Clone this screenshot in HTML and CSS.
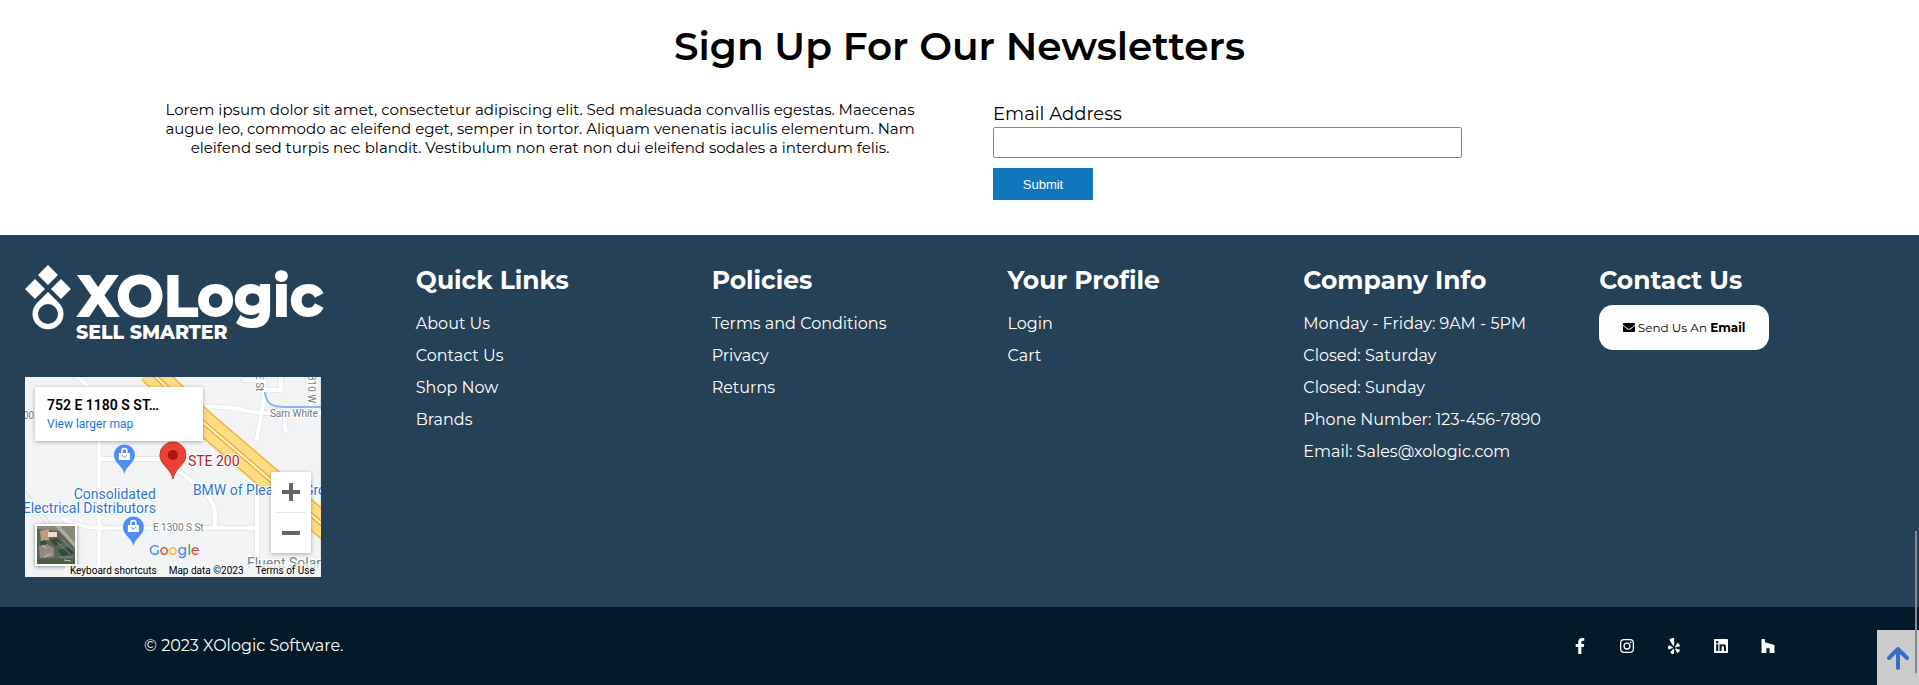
FILE: index.html
```html
<!DOCTYPE html>
<html lang="en">
<head>
<meta charset="utf-8">
<title>XOLogic</title>
<link rel="stylesheet" href="styles.css">
</head>
<body>
<section class="newsletter">
  <h2 class="newsletter-title">Sign Up For Our Newsletters</h2>
  <div class="newsletter-grid">
    <p class="newsletter-text">Lorem ipsum dolor sit amet, consectetur adipiscing elit. Sed malesuada convallis egestas. Maecenas augue leo, commodo ac eleifend eget, semper in tortor. Aliquam venenatis iaculis elementum. Nam eleifend sed turpis nec blandit. Vestibulum non erat non dui eleifend sodales a interdum felis.</p>
    <form class="signup">
      <label for="email">Email Address</label>
      <input id="email" type="email">
      <button type="submit">Submit</button>
    </form>
  </div>
</section>

<footer class="footer">
  <div class="footer-grid">
    <div class="brand">
      <svg class="logo" viewBox="0 0 296 76" role="img" aria-label="XOLogic Sell Smarter">
        <g fill="#fff">
          <path d="M23 0L33 10L23 20L13 10ZM10 14L20 24L10 34L0 24ZM36 14L46 24L36 34L26 24Z"/>
          <path fill-rule="evenodd" d="M23 27L34 38A15.500 15.500 0 1 1 12 38ZM23 39A10 10 0 1 0 23 59A10 10 0 1 0 23 39Z"/>
          <text class="logo-name" x="53" y="51">XOLogic</text>
          <text class="logo-tag" x="51" y="74">SELL SMARTER</text>
        </g>
      </svg>
      <div class="map">
        <svg class="map-art" viewBox="0 0 296 200" preserveAspectRatio="xMidYMid slice" aria-hidden="true">
          <rect width="296" height="200" fill="#f1f3f4"/>
          <g fill="none" stroke-linejoin="round" stroke-linecap="round">
            <g stroke="#dcdfe3" stroke-width="5">
              <path d="M52 0Q62 5 65 16M74 60V200M74 82H141Q150 87 154 94L174 110Q190 124 190 136V150M38 142Q58 151 76 151H232M232 110V200M178 30Q198 28 218 33Q230 36 250 36H296M239 0V22L232 62M219 3H239M239 13H256V0M260 38V53L262 53M286 0V30"/>
            </g>
            <g stroke="#fff" stroke-width="4">
              <path d="M52 0Q62 5 65 16M74 60V200M74 82H141Q150 87 154 94L174 110Q190 124 190 136V150M38 142Q58 151 76 151H232M232 110V200M178 30Q198 28 218 33Q230 36 250 36H296M239 0V22L232 62M219 3H239M239 13H256V0M260 38V53L262 53M286 0V30"/>
            </g>
            <path d="M0 113L26 147M0 121L60 196" stroke="#d5d7d9"/>
            <path d="M240 16C242 27 247 30 260 30H296" stroke="#8ab4f8" stroke-width="2"/>
            <g stroke-linecap="butt">
              <path d="M125 -6L178 45L234 93L304 153" stroke="#f0b43c" stroke-width="25"/>
              <path d="M125 -6L178 45L234 93L304 153" stroke="#fddc84" stroke-width="22"/>
              <path d="M125 -6L178 45L234 93L304 153" stroke="#f0b43c" stroke-width="5"/>
              <path d="M125 -6L178 45L234 93L304 153" stroke="#fff4d4" stroke-width="2"/>
            </g>
          </g>
          <g class="map-label" fill="#73777c" font-size="10">
            <text x="-2" y="42">00</text>
            <text x="245" y="40">Sam White</text>
            <text x="128" y="154">E 1300 S St</text>
            <text transform="translate(231 -3) rotate(90)">E St</text>
            <text transform="translate(283 -2) rotate(90)">310 W</text>
          </g>
          <g class="map-label" fill="#2f73d2" font-size="14">
            <text x="131" y="122" text-anchor="end">Consolidated</text>
            <text x="131" y="136" text-anchor="end">Electrical Distributors</text>
            <text x="168" y="118">BMW of Pleasant Grove</text>
            <text x="222" y="191" fill="#70838f">Fluent Solar</text>
            <text x="163" y="89" fill="#ad2424">STE 200</text>
          </g>
          <g>
            <path d="M99.500 97C98 89 89 86 89 78A10.500 10.500 0 0 1 110 78C110 86 101 89 99.500 97Z" fill="#4f8df5"/>
            <path d="M94 76H105V83H94Z" fill="#fff"/>
            <path d="M97 76V74A2.500 2.500 0 0 1 102 74V76" fill="none" stroke="#fff" stroke-width="1.500"/>
            <path d="M97 78Q99.500 82 102 78" fill="none" stroke="#4f8df5"/>
            <path d="M108.500 169C107 161 98 158 98 150A10.500 10.500 0 0 1 119 150C119 158 110 161 108.500 169Z" fill="#4f8df5"/>
            <path d="M103 148H114V155H103Z" fill="#fff"/>
            <path d="M106 148V146A2.500 2.500 0 0 1 111 146V148" fill="none" stroke="#fff" stroke-width="1.500"/>
            <path d="M106 150Q108.500 154 111 150" fill="none" stroke="#4f8df5"/>
          </g>
          <path d="M148 102C146 91 135 88 135 78A13 13 0 0 1 161 78C161 88 150 91 148 102Z" fill="#ea4335" stroke="#c5372b"/>
          <circle cx="148" cy="78" r="5" fill="#b11313"/>
          <text class="map-google" x="124" y="178" font-size="14"><tspan fill="#4285f4">G</tspan><tspan fill="#ea4335">o</tspan><tspan fill="#fbbc05">o</tspan><tspan fill="#4285f4">g</tspan><tspan fill="#34a853">l</tspan><tspan fill="#ea4335">e</tspan></text>
        </svg>
        <div class="map-card"><strong>752 E 1180 S ST…</strong><a href="#">View larger map</a></div>
        <div class="map-zoom">
          <button type="button" aria-label="Zoom in"><svg viewBox="0 0 18 18"><path d="M0 9H18M9 0V18"/></svg></button>
          <button type="button" aria-label="Zoom out"><svg viewBox="0 0 18 18"><path d="M0 9H18"/></svg></button>
        </div>
        <button type="button" class="map-satellite" aria-label="Show satellite imagery">
          <svg viewBox="0 0 38 38">
            <rect width="38" height="38" fill="#59645a"/>
            <path d="M0 0H38V20L22 5L0 3Z" fill="#89877b"/>
            <path d="M18 0L38 22V17L23 0Z" fill="#b3aca0"/>
            <path d="M3 5L12 3V14L4 15Z" fill="#bd9d7e"/><path d="M11 6H20V11H11Z" fill="#e8dfcd"/>
            <path d="M2 20L10 18L17 22V31L3 32Z" fill="#95897f"/>
            <path d="M0 33H38V38H0Z" fill="#4d5d43"/>
            <path d="M13 14L20 12L25 17L18 20ZM21 24L32 21L37 27L25 31ZM3 16L8 14L10 18L4 20Z" fill="#354b3a"/>
            <path d="M20 16L33 28M22 31H36M6 24L11 29M25 13L35 24" stroke="#87928a"/>
            <path d="M5 19L9 22M7 31L14 28M27 34L34 35" stroke="#ccc9bf"/>
          </svg>
        </button>
        <div class="map-legal"><a href="#">Keyboard shortcuts</a><span>Map data ©2023</span><a href="#">Terms of Use</a></div>
      </div>
    </div>
    <nav class="column" aria-label="Quick Links">
      <h3>Quick Links</h3>
      <ul><li><a href="#">About Us</a></li><li><a href="#">Contact Us</a></li><li><a href="#">Shop Now</a></li><li><a href="#">Brands</a></li></ul>
    </nav>
    <nav class="column" aria-label="Policies">
      <h3>Policies</h3>
      <ul><li><a href="#">Terms and Conditions</a></li><li><a href="#">Privacy</a></li><li><a href="#">Returns</a></li></ul>
    </nav>
    <nav class="column" aria-label="Your Profile">
      <h3>Your Profile</h3>
      <ul><li><a href="#">Login</a></li><li><a href="#">Cart</a></li></ul>
    </nav>
    <div class="column">
      <h3>Company Info</h3>
      <ul><li>Monday - Friday: 9AM - 5PM</li><li>Closed: Saturday</li><li>Closed: Sunday</li><li>Phone Number: 123-456-7890</li><li>Email: Sales@xologic.com</li></ul>
    </div>
    <div class="column">
      <h3>Contact Us</h3>
      <a class="email-button" href="#">
        <svg viewBox="0 64 512 384" aria-hidden="true"><path d="M502.300 190.800c3.900-3.100 9.700-.2 9.700 4.700V400c0 26.500-21.500 48-48 48H48c-26.500 0-48-21.500-48-48V195.600c0-5 5.700-7.800 9.700-4.700 22.400 17.400 52.100 39.500 154.100 113.600 21.100 15.400 56.700 47.800 92.200 47.600 35.700.3 72-32.800 92.300-47.600 102-74.100 131.600-96.300 154-113.700zM256 320c23.200.4 56.600-29.200 73.400-41.400 132.700-96.300 142.800-104.700 173.400-128.700 5.800-4.500 9.200-11.500 9.200-18.900v-19c0-26.500-21.500-48-48-48H48c-26.500 0-48 21.500-48 48v19c0 7.400 3.400 14.300 9.200 18.900 30.600 23.900 40.700 32.400 173.400 128.700 16.800 12.200 50.200 41.800 73.400 41.400z"/></svg>
        <span>Send Us An <b>Email</b></span>
      </a>
    </div>
  </div>
  <div class="bottom-bar">
    <span>© 2023 XOlogic Software.</span>
    <nav class="social" aria-label="Social media">
      <a href="#" aria-label="Facebook"><svg viewBox="0 0 320 512"><path d="M279.140 288l14.220-92.660h-88.910v-60.130c0-25.350 12.420-50.060 52.240-50.060h40.420V6.260S260.430 0 225.360 0c-73.220 0-121.080 44.380-121.080 124.720v70.620H22.890V288h81.390v224h100.170V288z"/></svg></a>
      <a href="#" aria-label="Instagram"><svg viewBox="0 0 448 512"><rect x="20" y="52" width="408" height="408" rx="110" fill="none" stroke="#fff" stroke-width="42"/><circle cx="224" cy="256" r="95" fill="none" stroke="#fff" stroke-width="42"/><circle cx="344" cy="136" r="27"/></svg></a>
      <a href="#" aria-label="Yelp"><svg viewBox="0 0 384 512"><path d="M42.900 240.320l99.620 48.610c19.200 9.400 16.200 37.510-4.500 42.710L30.500 358.450a22.790 22.790 0 0 1-28.210-19.600 197.160 197.160 0 0 1 9-85.320 22.800 22.800 0 0 1 31.610-13.210zm44 239.250a199.450 199.450 0 0 0 79.420 32.110A22.780 22.780 0 0 0 192.940 490l3.900-110.820c.7-21.300-25.500-31.910-39.810-16.100l-74.210 82.400a22.820 22.820 0 0 0 4.090 34.090zm145.340-109.920l58.810 94a22.930 22.930 0 0 0 34 5.500 198.360 198.360 0 0 0 52.710-67.610A23 23 0 0 0 364.170 370l-105.420-34.260c-20.310-6.500-37.810 15.800-26.510 33.910zm148.330-132.230a197.440 197.440 0 0 0-50.410-69.310 22.850 22.850 0 0 0-34 4.400l-62 91.920c-11.900 17.700 4.700 40.610 25.200 34.710L366 268.630a23 23 0 0 0 14.610-31.210zM62.110 30.180a22.860 22.860 0 0 0-9.900 32l104.120 180.440c11.700 20.200 42.610 11.900 42.610-11.400V22.880a22.670 22.670 0 0 0-24.500-22.800 320.370 320.370 0 0 0-112.330 30.100z"/></svg></a>
      <a href="#" aria-label="LinkedIn"><svg viewBox="0 0 448 512"><path d="M416 32H31.900C14.300 32 0 46.500 0 64.300v383.400C0 465.500 14.300 480 31.900 480H416c17.600 0 32-14.500 32-32.300V64.300c0-17.800-14.400-32.300-32-32.300zM135.400 416H69V202.200h66.500V416zm-33.200-243c-21.300 0-38.500-17.300-38.500-38.500S80.900 96 102.200 96c21.200 0 38.500 17.300 38.500 38.500 0 21.300-17.200 38.500-38.500 38.500zm282.100 243h-66.400V312c0-24.800-.5-56.700-34.500-56.700-34.600 0-39.900 27-39.900 54.900V416h-66.400V202.200h63.700v29.200h.9c8.900-16.800 30.600-34.500 62.900-34.500 67.200 0 79.700 44.300 79.700 101.900V416z"/></svg></a>
      <a href="#" aria-label="Houzz"><svg viewBox="0 0 448 512"><path d="M275.900 330.700H171.300V480H17V32h109.500v104.500l305.100 85.600V480H275.900z"/></svg></a>
    </nav>
  </div>
</footer>
<a class="to-top" href="#" aria-label="Back to top"><svg viewBox="0 0 24 24"><path d="M12 22V3M3 12L12 3L21 12"/></svg></a>
<div class="scroll-mark"></div>
</body>
</html>
```
FILE: styles.css
```css
* { box-sizing: border-box; }
body {
  margin: 0;
  background: #fff;
  color: #000;
  font-family: Montserrat, Inter, sans-serif;
  font-size: 16px;
  line-height: 20px;
}
a { color: inherit; text-decoration: none; }
button { border: 0; padding: 0; cursor: pointer; }

.newsletter { padding: 22px 144px 35px; }
.newsletter-title {
  margin: 0 0 30px;
  text-align: center;
  font-size: 39px;
  line-height: 48px;
  font-weight: 600;
}
.newsletter-grid {
  display: grid;
  grid-template-columns: 792fr 782fr;
  column-gap: 57px;
}
.newsletter-text {
  margin: 0 16px;
  font-size: 15px;
  line-height: 19px;
  text-align: center;
}
.signup { display: flex; flex-direction: column; align-items: flex-start; }
.signup label { font-size: 18px; line-height: 24px; padding: 2px 0 1px; }
.signup input {
  width: 60%;
  height: 31px;
  margin: 0 0 10px;
  border: 1px solid #858585;
  border-radius: 2px;
}
.signup button {
  width: 100px;
  height: 32px;
  background: #1177bc;
  color: #fff;
  font: 13px "Liberation Sans", Arial, sans-serif;
}

.footer { background: #254157; color: #fff; }
.footer-grid {
  display: grid;
  grid-template-columns: 391fr repeat(5, 296fr);
  padding: 30px 24px 30px 25px;
}
.brand { padding-right: 95px; }
.logo { display: block; width: 100%; margin-bottom: 36px; overflow: visible; }
.logo-name { font: 700 56px Montserrat, sans-serif; stroke: #fff; stroke-width: 2px; }
.logo-tag { font: 800 19px Montserrat, sans-serif; }

.column h3 { margin: 0 0 13px; font-size: 25px; line-height: 30px; font-weight: 700; }
.column ul { margin: 0; padding: 0; list-style: none; }
.column li { line-height: 32px; white-space: nowrap; }
.column:last-child h3 { margin-bottom: 10px; }
.email-button {
  display: inline-flex;
  align-items: center;
  justify-content: center;
  gap: 3px;
  width: 170px;
  height: 45px;
  border-radius: 14px;
  background: #fff;
  color: #000;
  font-size: 12px;
}
.email-button svg { width: 12px; }

.map { position: relative; height: 200px; overflow: hidden; font-family: Roboto, sans-serif; color: #000; }
.map-art { display: block; width: 100%; height: 100%; }
.map-label { font-family: Roboto, sans-serif; paint-order: stroke; stroke: #fff; stroke-width: 2px; }
.map-google { font-family: Montserrat, sans-serif; font-weight: 500; }
.map-card {
  position: absolute;
  left: 10px;
  top: 10px;
  width: 168px;
  height: 54px;
  padding: 9px 12px;
  display: flex;
  flex-direction: column;
  background: #fff;
  box-shadow: 0 1px 4px rgba(0, 0, 0, .3);
  font-size: 12px;
  line-height: 19px;
}
.map-card strong { font-size: 14px; font-weight: 600; }
.map-card a { color: #1a73e8; }
.map-zoom {
  position: absolute;
  right: 10px;
  top: 95px;
  width: 40px;
  padding: 0 5px;
  background: #fff;
  box-shadow: 0 1px 4px rgba(0, 0, 0, .3);
}
.map-zoom button { display: grid; place-items: center; width: 30px; height: 40px; background: #fff; }
.map-zoom button + button { border-top: 1px solid #e6e6e6; height: 41px; }
.map-zoom svg { width: 18px; height: 18px; stroke: #666; stroke-width: 4; }
.map-satellite {
  position: absolute;
  left: 10px;
  bottom: 11px;
  width: 42px;
  height: 42px;
  border: 2px solid #fff;
  box-shadow: 0 1px 4px rgba(0, 0, 0, .4);
}
.map-satellite svg { display: block; width: 38px; height: 38px; }
.map-legal {
  position: absolute;
  right: 0;
  bottom: 0;
  display: flex;
  gap: 12px;
  padding: 0 6px 0 5px;
  background: rgba(245, 245, 245, .75);
  font-size: 10px;
  line-height: 13px;
  white-space: nowrap;
}

.bottom-bar {
  display: flex;
  align-items: center;
  justify-content: space-between;
  min-height: 78px;
  padding: 1px 143px 0 144px;
  background: #021a29;
}
.social { display: flex; gap: 31px; }
.social a { display: grid; place-items: center; width: 16px; height: 16px; }
.social svg { height: 16px; fill: #fff; }
.to-top {
  position: fixed;
  right: 0;
  bottom: 0;
  display: grid;
  place-items: center;
  width: 42px;
  height: 55px;
  background: #ccc;
}
.to-top svg { width: 24px; height: 24px; fill: none; stroke: #326fca; stroke-width: 4; stroke-linecap: round; stroke-linejoin: round; }
.scroll-mark { position: fixed; right: 2px; bottom: 12px; width: 2px; height: 142px; background: #858b90; }
```
